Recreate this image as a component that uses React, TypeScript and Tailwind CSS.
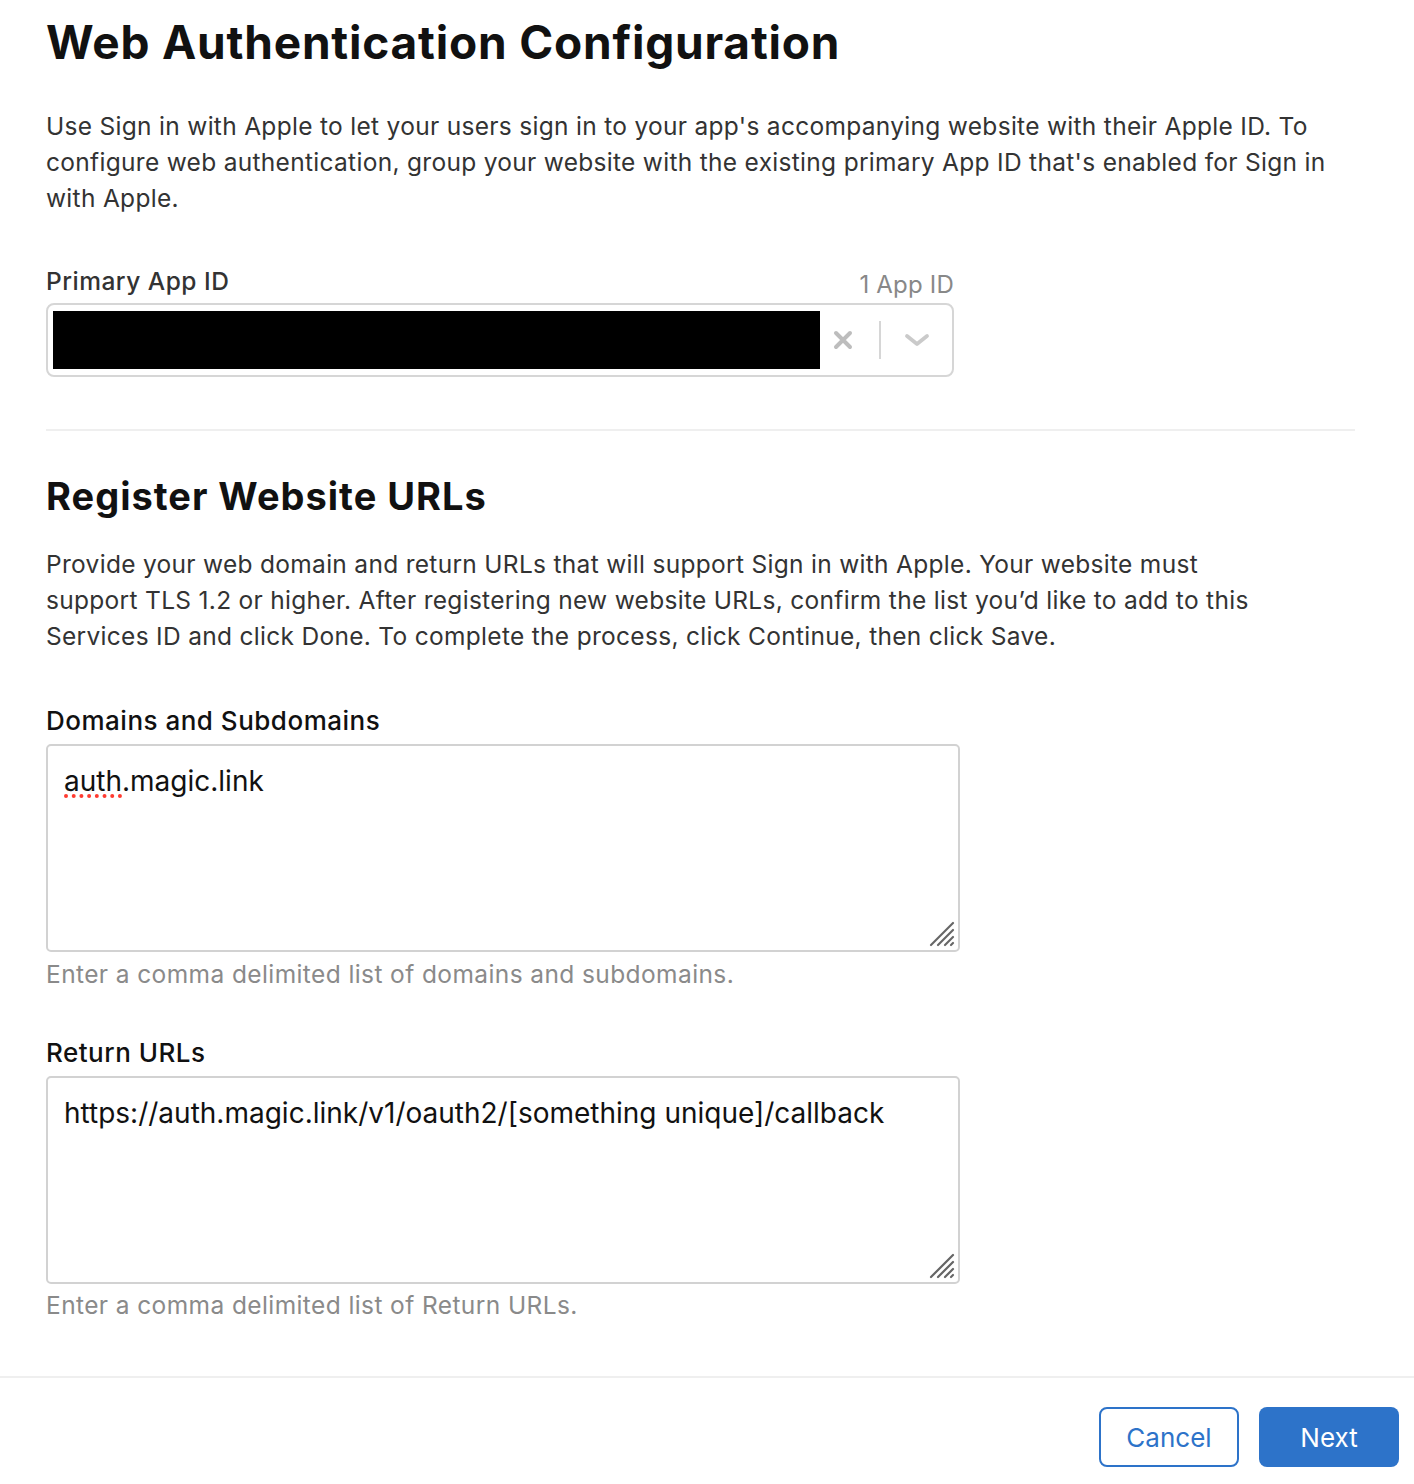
import React from "react";

const font = { fontFamily: "Inter, 'Noto Sans', sans-serif" };

function Grip() {
  return (
    <svg className="absolute right-[2px] bottom-[2px]" width="28" height="28" viewBox="0 0 28 28">
      <g stroke="#666" strokeWidth="2.2" strokeLinecap="round">
        <line x1="3" y1="25" x2="25" y2="3" />
        <line x1="10" y1="25" x2="25" y2="10" />
        <line x1="17" y1="25" x2="25" y2="17" />
        <line x1="23" y1="25" x2="25" y2="23" />
      </g>
    </svg>
  );
}

export default function App() {
  return (
    <div className="bg-white w-[1414px] min-h-[1484px] text-[#333]" style={font}>
      <div className="pl-[46px] pr-[59px]">
        <h1 className="text-[46px] leading-[52px] font-bold text-[#111] pt-[16px] tracking-[0.8px]">
          Web Authentication Configuration
        </h1>
        <p className="mt-[40px] text-[24.5px] leading-[36px] text-[#333] tracking-[0.3px] whitespace-nowrap">
          Use Sign in with Apple to let your users sign in to your app's accompanying website with their Apple ID. To<br />
          configure web authentication, group your website with the existing primary App ID that's enabled for Sign in<br />
          with Apple.
        </p>

        <div className="mt-[50px] w-[908px]">
          <div className="flex items-end justify-between">
            <span className="text-[24.5px] leading-[30px] text-[#333] font-medium tracking-[0.5px]">Primary App ID</span>
            <span className="text-[24px] leading-[30px] text-[#888] translate-y-[4px] tracking-[0.2px]">1 App ID</span>
          </div>
          <div className="mt-[7px] h-[74px] border-2 border-[#d6d6d6] rounded-[8px] flex items-center pl-[5px]">
            <div className="h-[58px] w-[767px] bg-black" />
            <div className="w-[46px] flex items-center justify-center">
              <svg width="20" height="20" viewBox="0 0 20 20">
                <path d="M3 3 L17 17 M17 3 L3 17" stroke="#bdbdbd" strokeWidth="4" strokeLinecap="round" />
              </svg>
            </div>
            <div className="ml-[13px] w-[2px] h-[38px] bg-[#d6d6d6]" />
            <div className="w-[71px] flex items-center justify-center">
              <svg width="26" height="16" viewBox="0 0 26 16">
                <path d="M3 4 L13 12 L23 4" fill="none" stroke="#cacaca" strokeWidth="3.8" strokeLinecap="round" strokeLinejoin="round" />
              </svg>
            </div>
          </div>
        </div>

        <div className="mt-[52px] h-[2px] bg-[#efefef] w-[1309px]" />

        <h2 className="mt-[43px] text-[38px] leading-[44px] font-bold text-[#111] tracking-[1px]">
          Register Website URLs
        </h2>
        <p className="mt-[28px] text-[24.5px] leading-[36px] text-[#333] tracking-[0.3px] whitespace-nowrap">
          Provide your web domain and return URLs that will support Sign in with Apple. Your website must<br />
          support TLS 1.2 or higher. After registering new website URLs, confirm the list you’d like to add to this<br />
          Services ID and click Done. To complete the process, click Continue, then click Save.
        </p>

        <div className="mt-[50px] w-[914px]">
          <div className="text-[26px] leading-[34px] text-[#111] font-medium tracking-[0.5px]">Domains and Subdomains</div>
          <div className="relative mt-[6px] h-[208px] border-2 border-[#d2d2d2] rounded-[5px] px-[16px] pt-[15px] text-[28px] leading-[40px] text-[#111]">
            <span className="relative">
              auth
              <span className="absolute left-0 right-0 bottom-[0px] border-b-[4px] border-dotted border-[#ff3b30]" />
            </span>
            .magic.link
            <Grip />
          </div>
          <div className="mt-[7px] text-[24.5px] leading-[30px] text-[#8a8a8a] tracking-[0.4px]">
            Enter a comma delimited list of domains and subdomains.
          </div>
        </div>

        <div className="mt-[47px] w-[914px]">
          <div className="text-[26px] leading-[34px] text-[#111] font-medium tracking-[0.5px]">Return URLs</div>
          <div className="relative mt-[6px] h-[208px] border-2 border-[#d2d2d2] rounded-[5px] px-[16px] pt-[15px] text-[28px] leading-[40px] text-[#111]">
            https://auth.magic.link/v1/oauth2/[something unique]/callback
            <Grip />
          </div>
          <div className="mt-[6px] text-[24.5px] leading-[30px] text-[#8a8a8a] tracking-[0.4px]">
            Enter a comma delimited list of Return URLs.
          </div>
        </div>
      </div>

      <div className="mt-[56px] h-[2px] bg-[#efefef] w-full" />
      <div className="flex justify-end gap-[20px] pr-[15px] pt-[29px]">
        <button className="w-[140px] h-[60px] rounded-[8px] border-2 border-[#2d73c9] text-[#2d73c9] text-[26px] bg-white">
          Cancel
        </button>
        <button className="w-[140px] h-[60px] rounded-[8px] bg-[#2d73c9] text-white text-[26px]">
          Next
        </button>
      </div>
    </div>
  );
}
